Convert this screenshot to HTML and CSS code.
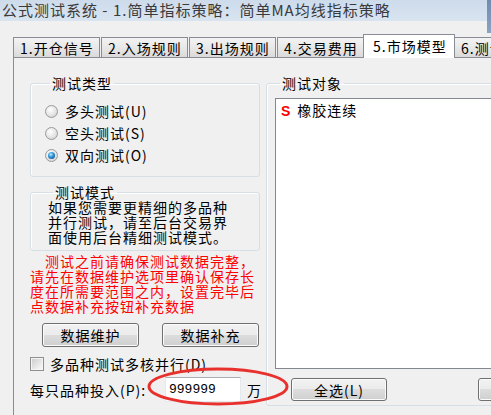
FILE: index.html
```html
<!DOCTYPE html>
<html>
<head>
    <meta charset="utf-8">
    <title>公式测试系统</title>
    <link rel="stylesheet" href="styles.css">
</head>
<body>
<div class="window">

    <div class="title-bar">公式测试系统 - 1.简单指标策略：简单MA均线指标策略</div>
    <div class="edge-strip"></div>

    <div class="tabs">
        <div class="tab">1.开仓信号</div>
        <div class="tab">2.入场规则</div>
        <div class="tab">3.出场规则</div>
        <div class="tab">4.交易费用</div>
        <div class="tab active">5.市场模型</div>
        <div class="tab">6.测试设置</div>
    </div>

    <div class="tab-panel">

        <div class="left-col">

            <fieldset class="group type-group">
                <legend>测试类型</legend>
                <div class="radio-row"><span class="radio"></span>多头测试(U)</div>
                <div class="radio-row"><span class="radio"></span>空头测试(S)</div>
                <div class="radio-row"><span class="radio checked"></span>双向测试(O)</div>
            </fieldset>

            <fieldset class="group mode-group">
                <legend>测试模式</legend>
                <p class="mode-text">如果您需要更精细的多品种<br>并行测试，请至后台交易界<br>面使用后台精细测试模式。</p>
            </fieldset>

            <p class="warning-text"><span class="indent"></span>测试之前请确保测试数据完整，<br>请先在数据维护选项里确认保存长<br>度在所需要范围之内，设置完毕后<br>点数据补充按钮补充数据</p>

            <div class="button-row">
                <button class="win-button">数据维护</button>
                <button class="win-button">数据补充</button>
            </div>

            <div class="check-row"><span class="checkbox"></span>多品种测试多核并行(D)</div>

            <div class="invest-row">
                <span class="invest-label">每只品种投入(P):</span>
                <input type="text" class="invest-input" value="999999">
                <span class="unit">万</span>
                <svg class="highlight-ring" width="142" height="39" viewBox="0 0 142 39">
                    <ellipse cx="71" cy="19.5" rx="69" ry="17.5" fill="none" stroke="#e8312c" stroke-width="3"/>
                </svg>
            </div>

        </div>

        <div class="right-col">
            <fieldset class="group target-group">
                <legend>测试对象</legend>
                <div class="list-box">
                    <div class="list-item"><span class="item-tag">S</span>橡胶连续</div>
                </div>
                <div class="target-buttons">
                    <button class="win-button select-all">全选(L)</button>
                    <button class="win-button">反选(R)</button>
                </div>
            </fieldset>
        </div>

    </div>

</div>
</body>
</html>
```

FILE: styles.css
```css
* {
    box-sizing: border-box;
}

body {
    margin: 0;
    background: #f0f0f0;
    font-family: "Noto Sans CJK SC", sans-serif;
    font-size: 14px;
    letter-spacing: 1px;
    color: #000;
}

.window {
    position: relative;
    width: 491px;
    height: 415px;
    overflow: hidden;
}

.title-bar {
    height: 21px;
    line-height: 19px;
    padding-left: 2px;
    font-size: 15px;
    letter-spacing: 1px;
    color: #3a3a3a;
    background: linear-gradient(#cddbeb, #d9e4f0);
    white-space: nowrap;
}

.edge-strip {
    position: absolute;
    top: 0;
    right: 0;
    width: 4px;
    height: 33px;
    background: linear-gradient(#6f8cb0, #8aa3c2);
}

/* tabs */

.tabs {
    display: flex;
    align-items: flex-end;
    height: 23px;
    margin-top: 13px;
    padding-left: 13px;
    white-space: nowrap;
}

.tab {
    flex: none;
    width: 87px;
    height: 20px;
    margin-right: 1px;
    padding-left: 6px;
    line-height: 20px;
    border: 1px solid #898c95;
    border-bottom: none;
    background: linear-gradient(#f3f3f3, #e8e8e8 50%, #dadada);
}

.tab.active {
    position: relative;
    z-index: 1;
    width: 92px;
    height: 24px;
    margin: 0 -1px -1px -2px;
    padding-left: 9px;
    line-height: 22px;
    background: #fff;
}

.tab-panel {
    display: flex;
    gap: 6px;
    width: 520px;
    height: 380px;
    margin-left: 13px;
    padding: 17px 0 0 16px;
    border: 1px solid #898c95;
    background: #f0f0f0;
}

/* group boxes */

.group {
    margin: 0;
    padding: 0;
    border: 1px solid #d5dfe5;
    border-radius: 3px;
    box-shadow: inset 1px 1px 0 #fff;
}

.group legend {
    margin-left: 5px;
    padding: 0 2px;
    line-height: 16px;
}

.left-col {
    flex: none;
    width: 230px;
}

.type-group {
    height: 102px;
    padding: 9px 0 0 14px;
}

.radio-row {
    display: flex;
    align-items: center;
    height: 22px;
}

.radio {
    position: relative;
    width: 13px;
    height: 13px;
    margin-right: 7px;
    border: 1px solid #9a9a9a;
    border-radius: 50%;
    background: radial-gradient(circle at 40% 35%, #fff, #e4e4e4 55%, #c8c8c8);
}

.radio.checked::after {
    content: "";
    position: absolute;
    left: 2px;
    top: 2px;
    width: 7px;
    height: 7px;
    border-radius: 50%;
    background: radial-gradient(circle at 40% 35%, #b4ecff, #2a8fd6 45%, #0b3f78);
}

.mode-group {
    height: 67px;
    margin-top: 7px;
    padding: 0 0 0 17px;
}

.mode-text {
    margin: 0;
    line-height: 15px;
    white-space: nowrap;
}

.warning-text {
    margin: 3px 0 0;
    line-height: 15px;
    color: #ff0000;
    white-space: nowrap;
}

.indent {
    display: inline-block;
    width: 15px;
}

/* buttons */

.button-row {
    display: flex;
    gap: 23px;
    margin-top: 9px;
    padding-left: 12px;
}

.win-button {
    flex: none;
    width: 97px;
    height: 24px;
    padding: 0;
    font-family: inherit;
    font-size: 14px;
    letter-spacing: 1px;
    color: #000;
    border: 1px solid #707070;
    border-radius: 3px;
    background: linear-gradient(#f2f2f2, #ebebeb 50%, #dddddd 50%, #cfcfcf);
    box-shadow: inset 0 0 0 1px #fbfbfb;
}

.check-row {
    display: flex;
    align-items: center;
    height: 18px;
    margin-top: 8px;
}

.checkbox {
    width: 14px;
    height: 14px;
    margin-right: 6px;
    border: 1px solid #8e8f8f;
    background: linear-gradient(135deg, #c9c9c9, #eeeeee 70%, #fafafa);
    box-shadow: inset 0 0 0 1px #f4f4f4;
}

.invest-row {
    position: relative;
    display: flex;
    align-items: center;
    height: 25px;
    margin-top: 4px;
}

.invest-label {
    flex: none;
    width: 135px;
}

.invest-input {
    width: 76px;
    height: 25px;
    padding: 0 0 0 3px;
    font-family: "Liberation Mono", monospace;
    font-size: 13px;
    letter-spacing: 0;
    border: 1px solid #e3e9ef;
    border-top-color: #abadb3;
    background: #fff;
}

.unit {
    margin-left: 6px;
}

.highlight-ring {
    position: absolute;
    left: 117px;
    top: -10px;
}

/* right side */

.right-col {
    flex: none;
    width: 240px;
}

.target-group {
    height: 331px;
    padding: 7px 0 0 8px;
}

.list-box {
    height: 271px;
    padding: 2px 5px;
    border: 1px solid #828790;
    background: #fff;
}

.list-item {
    line-height: 18px;
}

.item-tag {
    margin-right: 6px;
    font-family: "Liberation Sans", sans-serif;
    font-weight: bold;
    color: #ff0000;
}

.target-buttons {
    display: flex;
    gap: 91px;
    margin-top: 9px;
    padding-left: 16px;
}

.target-buttons .win-button {
    width: 96px;
    height: 23px;
}
```
